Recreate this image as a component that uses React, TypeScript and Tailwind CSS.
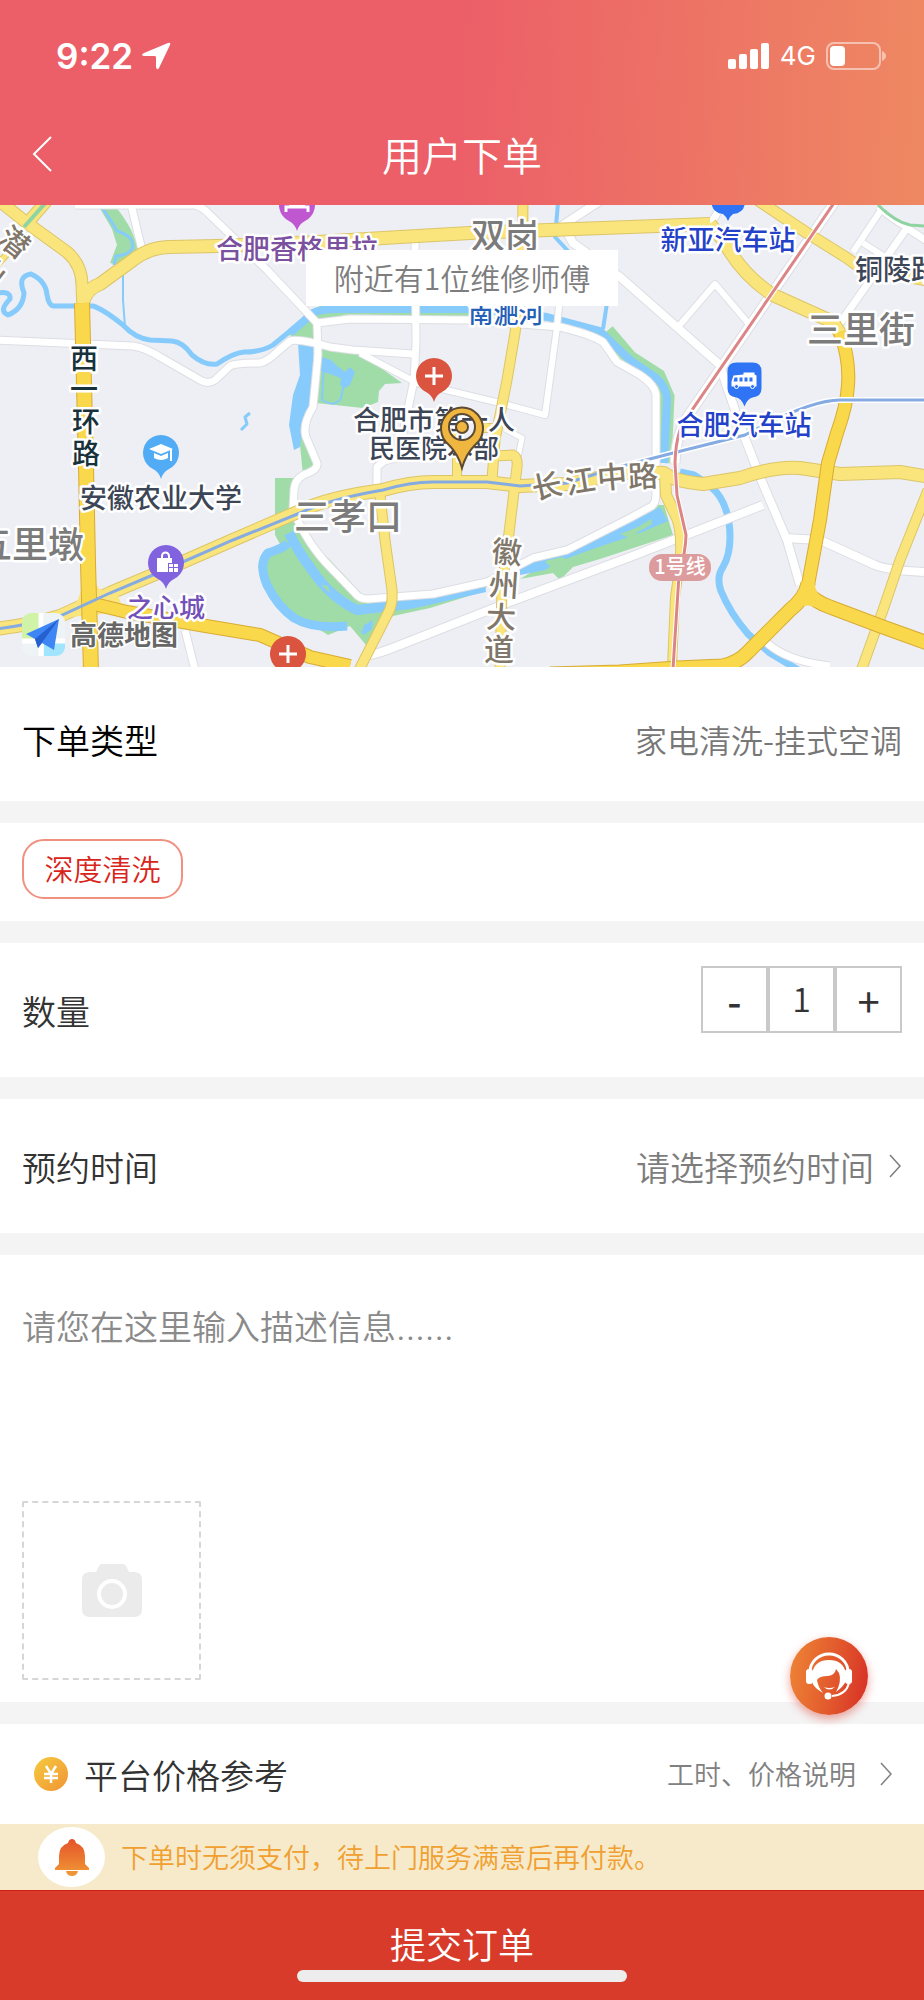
import { useState } from "react";

type Road = { d: string; w: number };

const whiteRoads: Road[] = [
  { d: "M-5 135 L133 141 Q146 143 160 152 L200 175 Q208 180 215 175 L230 161 Q236 158 260 158 Q268 156 277 147 L290 136 Q298 133 330 142 L353 145 L413 149", w: 7 },
  { d: "M75 0 L195 0 Q203 2 210 10 L267 65 L317 118", w: 7 },
  { d: "M317 118 L318 150 L313 202 Q302 220 306 232 L317 258 Q318 264 308 268 Q295 272 294 285 L293 305 Q308 340 330 362 L355 388 Q359 394 368 394 L433 389 L487 377 L533 353 L567 345 L630 313 L652 301 Q656 298 656 288 L656 190 Q655 180 640 170 L617 157 L603 137 Q590 129 560 122 L467 115 L350 114 Z", w: 7 },
  { d: "M130 -5 L142 45", w: 7 },
  { d: "M415 38 L416 138 L414 175 L403 228 L400 252 L384 256 L377 262 L377 284", w: 7 },
  { d: "M360 148 L417 178 L500 198 L545 210 L557 122 L560 90", w: 6 },
  { d: "M600 -4 L563 20 L573 38 L620 72 L720 160 L727 182 L743 228 L760 272 L787 335 L800 380", w: 8 },
  { d: "M678 122 L715 79 L748 118", w: 6 },
  { d: "M836 -5 L692 205 Q676 225 675 258", w: 9 },
  { d: "M370 450 Q380 448 390 444 L507 398 L630 352 L763 300", w: 8 },
  { d: "M784 333 L820 335 L875 360 Q885 365 924 367", w: 8 },
  { d: "M765 436 Q785 456 830 461", w: 7 },
  { d: "M840 118 L907 23 L930 38", w: 7 },
  { d: "M883 2 L853 47 M863 38 L888 54", w: 6 },
  { d: "M907 23 Q890 14 878 2", w: 5 },
  { d: "M185 425 L195 465", w: 7 },
  { d: "M505 224 L522 233 L518 252", w: 5 },
  { d: "M710 20 L722 0", w: 7 },
];

const lightRoads: Road[] = [
  { d: "M-8 -10 L27 18 L67 47 Q82 60 82 80 L83 104", w: 11 },
  { d: "M50 -8 L24 22", w: 11 },
  { d: "M-4 61 L9 47", w: 5 },
  { d: "M83 98 Q86 84 100 79 L133 55 Q150 42 170 42 L217 41 L317 37 L400 32 L470 28 L630 22 L710 19", w: 12 },
  { d: "M710 19 L723 35 Q742 70 773 90 L833 117 L842 132", w: 12 },
  { d: "M523 -5 L522 75 L515 128 L507 175 L495 235 L492 275", w: 9 },
  { d: "M492 251 L513 250 Q518 252 517 262 L509 328 L502 382 L500 465", w: 9 },
  { d: "M457 228 L457 275 M478 223 L500 223", w: 8 },
  { d: "M-5 424 Q30 420 60 411 L110 388 L160 367 L233 335 L300 306 Q330 292 383 285 Q410 277 433 277 L487 277 L520 281 L567 279 L630 267 L664 268 Q673 276 703 279 L740 273 Q775 261 800 263 L840 269 L900 267 L930 272", w: 12 },
  { d: "M380 290 L385 335 L392 385 Q393 400 388 408 L359 465", w: 9 },
  { d: "M665 268 L666 290 L677 313 Q682 325 681 350", w: 10 },
  { d: "M681 350 L675 392 L672 462", w: 8 },
  { d: "M928 285 L900 355 L883 405 L861 466", w: 9 },
  { d: "M753 -8 L807 28 L847 53 L862 64 L930 76", w: 10 },
];

const darkRoads: Road[] = [
  { d: "M82 98 L83 138 L86 262 L88 358 L91 466", w: 14 },
  { d: "M840 127 Q850 155 848 180 Q847 200 837 228 L828 258 L820 315 L808 380", w: 12 },
  { d: "M808 378 Q806 392 790 405 L748 447 Q738 458 722 461 L677 463 L620 467 L550 469", w: 13 },
  { d: "M806 386 Q815 397 830 402 L883 422 L930 439", w: 13 },
  { d: "M90 398 L127 407 L200 420 L260 430 L310 452 L350 461", w: 12 },
];

type Label = { t: string; x: number; y: number; s: number; c: string; anchor?: "start" | "middle" };

const labels: Label[] = [
  { t: "合肥香格里拉", x: 297, y: 54, s: 27, c: "#7a509f" },
  { t: "双岗", x: 505, y: 43, s: 34, c: "#7b7b7b" },
  { t: "南淝河", x: 506, y: 118, s: 25, c: "#2560b8" },
  { t: "新亚汽车站", x: 728, y: 45, s: 27, c: "#2441c9" },
  { t: "铜陵路", x: 855, y: 75, s: 28, c: "#3d4656", anchor: "start" },
  { t: "三里街", x: 861, y: 138, s: 36, c: "#7b7b7b" },
  { t: "安徽农业大学", x: 161, y: 303, s: 27, c: "#3d4656" },
  { t: "五里墩", x: 30, y: 353, s: 36, c: "#7b7b7b" },
  { t: "之心城", x: 166, y: 412, s: 26, c: "#7351b8" },
  { t: "三孝口", x: 348, y: 325, s: 36, c: "#7b7b7b" },
  { t: "合肥市第一人", x: 434, y: 225, s: 27, c: "#3d4656" },
  { t: "民医院本部", x: 434, y: 253, s: 26, c: "#3d4656" },
  { t: "合肥汽车站", x: 744, y: 230, s: 27, c: "#2441c9" },
];

// road names are set one character at a time so they follow the road
const roadNames: { t: string; x: number; y: number; r: number; s: number; c: string }[] = [
  { t: "西", x: 84, y: 153, r: 0, s: 28, c: "#17323a" },
  { t: "一", x: 84, y: 184, r: 0, s: 28, c: "#17323a" },
  { t: "环", x: 86, y: 216, r: 0, s: 28, c: "#17323a" },
  { t: "路", x: 86, y: 248, r: 0, s: 28, c: "#17323a" },
  { t: "长", x: 547, y: 281, r: -12, s: 30, c: "#80776a" },
  { t: "江", x: 580, y: 276, r: -9, s: 30, c: "#80776a" },
  { t: "中", x: 612, y: 272, r: -5, s: 30, c: "#80776a" },
  { t: "路", x: 643, y: 271, r: -3, s: 30, c: "#80776a" },
  { t: "徽", x: 507, y: 347, r: 5, s: 30, c: "#80776a" },
  { t: "州", x: 504, y: 380, r: 4, s: 30, c: "#80776a" },
  { t: "大", x: 501, y: 412, r: 2, s: 30, c: "#80776a" },
  { t: "道", x: 499, y: 444, r: 0, s: 30, c: "#80776a" },
  { t: "潜", x: 14, y: 37, r: 38, s: 30, c: "#80776a" },
  { t: "山", x: -9, y: 66, r: 38, s: 30, c: "#80776a" },
];

function Roads({ roads, fill, edge }: { roads: Road[]; fill: string; edge: string }) {
  return (
    <g fill="none" strokeLinejoin="round">
      {roads.map((r, i) => (
        <path key={i} d={r.d} stroke={edge} strokeWidth={r.w + 2} />
      ))}
      {roads.map((r, i) => (
        <path key={i} d={r.d} stroke={fill} strokeWidth={r.w} />
      ))}
    </g>
  );
}

function Pin({ x, y, color, children }: { x: number; y: number; color: string; children?: React.ReactNode }) {
  return (
    <g transform={`translate(${x} ${y})`}>
      <path d="M0 26 Q-2 19 -8 16 A18 18 0 1 1 8 16 Q2 19 0 26Z" fill={color} />
      {children}
    </g>
  );
}

function CityMap() {
  return (
    <svg
      viewBox="0 0 924 462"
      preserveAspectRatio="xMidYMid slice"
      className="block h-[462px] w-full bg-[#edeff4] font-medium"
      role="img"
      aria-label="高德地图"
    >
      {/* parks */}
      <g fill="#a0dca8">
        <path d="M98 0 L116 2 Q130 20 134 32 L140 46 L118 60 L110 58 L117 40 L112 24 Z" />
        <path d="M287 130 L307 107 L320 101 L355 102 L340 112 L320 122 L314 134 Z" />
        <path d="M320 144 L360 148 L402 178 L385 179 L379 186 L378 197 L363 203 L316 198 Z" />
        <path d="M275 273 L297 273 L295 305 L330 362 L357 388 L366 398 L395 396 L487 379 L485 386 L430 403 L393 411 L366 440 L350 421 L328 430 L320 425 L297 417 L272 392 L258 362 L264 346 L280 339 L275 330 Z" />
        <path d="M308 335 L330 355 L358 385 L366 393 L355 390 L328 366 Z" />
        <path d="M300 205 L310 208 L304 230 L316 262 L303 270 L300 240 Z" />
        <path d="M520 374 L553 368 L560 375 L573 362 L600 354 L673 330 L664 300 L655 300 L620 322 L560 350 Z" />
      </g>
      <g fill="none" stroke="#a0dca8">
        <path d="M607 126 L630 153 L658 171 L667 192 L664 258" strokeWidth="15" />
        <path d="M320 106 L350 105 L480 107" strokeWidth="9" />
      </g>

      {/* rivers and lakes */}
      <g fill="none" stroke="#86cbfb" strokeWidth="5" strokeLinejoin="round">
        <path d="M-2 88 Q11 86 10 94 Q-2 106 8 110 Q23 104 24 88 Q17 71 31 69 Q46 76 47 90 Q49 102 55 101 L93 101 Q103 104 123 120 Q135 133 150 135 L172 136 Q183 137 192 150 Q205 161 217 159 Q233 148 244 147 Q262 147 273 140 L300 118" />
        <path d="M290 128 L313 108 Q320 104 340 104 L480 104 L547 112 L600 126 Q612 138 630 155 L655 172 Q667 182 667 195 L664 258" strokeWidth="8" />
        <path d="M100 0 Q110 14 117 26 Q136 32 132 44 Q128 50 116 51 L114 60" strokeWidth="3" />
        <path d="M123 70 L123 95 L125 122" strokeWidth="2" />
        <path d="M558 -2 L555 32 L568 46 M607 98 L603 124" strokeWidth="4" />
        <path d="M680 267 L694 270 Q714 282 720 292 Q730 308 730 332 Q730 350 723 362 Q716 372 721 386 Q730 408 748 429 L770 448 L800 466" strokeWidth="7" />
        <path d="M288 338 Q284 343 268 348 Q258 358 267 380 Q278 402 294 413 Q312 424 347 421" strokeWidth="9" />
        <path d="M289 328 Q297 345 312 365 Q330 392 357 405 L410 399 L485 382" strokeWidth="10" />
        <path d="M324 155 L322 195 Q335 203 341 193 L344 178" strokeWidth="2" />
        <path d="M250 208 L245 212 L247 219 L241 225" strokeWidth="3" />
      </g>
      <g fill="#86cbfb">
        <path d="M298 138 L314 140 L311 200 L302 224 L300 242 L294 245 L289 220 L293 190 L300 170 Z" />
        <path d="M322 152 L331 155 L337 161 L345 167 L350 162 L355 167 L350 180 L345 183 L340 180 L341 173 L321 166 Z" />
        <path d="M520 358 L533 355 L567 347 L630 317 L660 302 L668 316 L640 328 L590 345 L555 358 L545 365 L520 370 Z" />
        <path d="M356 422 L362 427 L364 420 L373 415 L372 424 L364 430 Z" />
      </g>
      <g fill="#a0dca8">
        <path d="M620 329 L638 322 L651 314 L652 319 L638 327 L632 334 Z" />
        <path d="M545 356 L562 352 L568 355 L560 363 L548 360 Z" />
        <path d="M321 380 L328 381 L330 388 Z" />
      </g>

      <Roads roads={whiteRoads} fill="#ffffff" edge="#dcdee3" />
      <Roads roads={lightRoads} fill="#fae57d" edge="#dcc568" />
      <path d="M49 -6 L24 22" stroke="#8ed4a0" strokeWidth="4" />
      <path d="M60 413 Q80 402 82 378 L96 378 Q98 388 112 385 L118 390 L124 407 Z" fill="#fae57d" />
      <Roads roads={darkRoads} fill="#f9d84b" edge="#d9ab34" />
      <path d="M798 396 Q806 390 807 374 L814 374 Q814 388 826 397 L820 404 Q808 398 800 402 Z" fill="#f9d84b" />

      {/* metro lines */}
      <g fill="none">
        <path d="M615 263 L677 247 L745 230 Q810 195 840 195 L924 195" stroke="#fff" strokeWidth="6" />
        <path d="M-5 424 Q30 420 60 411 L110 388 L160 367 L233 335 L300 308 Q330 294 383 285 Q410 277 433 277 L487 277 L520 281 L567 278 L615 263 L677 247 L745 230 Q810 195 840 195 L924 195" stroke="#85abe2" strokeWidth="3" />
        <path d="M834 -2 L692 205 Q676 220 675 258 L677 290 L686 330 Q686 345 679 370 L673 464" stroke="#fff" strokeWidth="5" />
        <path d="M834 -2 L692 205 Q676 220 675 258 L677 290 L686 330 Q686 345 679 370 L673 464" stroke="#dc8587" strokeWidth="3" />
        <path d="M878 0 Q895 17 910 20 L924 21" stroke="#8ed4a0" strokeWidth="3" />
      </g>

      <rect x="649" y="349" width="62" height="27" rx="13" fill="#dc9b9d" />
      <text x="680" y="369" fontSize="20" fill="#fff" textAnchor="middle">
        1号线
      </text>

      <g stroke="#fff" strokeWidth="5" strokeLinejoin="round" paintOrder="stroke">
        {labels.map((l) => (
          <text key={l.t} x={l.x} y={l.y} fontSize={l.s} fill={l.c} textAnchor={l.anchor ?? "middle"}>
            {l.t}
          </text>
        ))}
        {roadNames.map((n, i) => (
          <text
            key={i}
            transform={`translate(${n.x} ${n.y}) rotate(${n.r})`}
            y={Math.round(n.s * 0.38)}
            fontSize={n.s}
            fill={n.c}
            textAnchor="middle"
          >
            {n.t}
          </text>
        ))}
      </g>

      {/* places */}
      <Pin x={297} y={0} color="#bf58d0">
        <path d="M-11 7 V2 H11 V7 M-8 -1 H8" stroke="#fff" strokeWidth="3" fill="none" />
      </Pin>
      <path d="M711 -4 H745 Q745 8 733 9 Q730 11 728 16 Q726 11 723 9 Q712 8 711 -4Z" fill="#2f74f5" />
      <Pin x={434} y={171} color="#da5440">
        <path d="M-9 0 H9 M0 -9 V9" stroke="#fff" strokeWidth="3" />
      </Pin>
      <Pin x={161} y={248} color="#51acf5">
        <path d="M-12 -4 L0 -9 L12 -4 L0 1Z M-7 0 L0 3 L7 0 V5 Q0 9 -7 5Z" fill="#fff" />
        <path d="M10 -4 V8" stroke="#fff" strokeWidth="2" />
      </Pin>
      <Pin x={166} y={358} color="#8163e0">
        <path d="M-9 -5 H6 V0 H2 V9 H-9Z M3 1 H7 V4 H3Z M8 1 H12 V4 H8Z M3 5 H7 V9 H3Z M8 5 H12 V9 H8Z" fill="#fff" />
        <path d="M-4 -2 V-7 A3 3 0 0 1 3 -7 V-2" stroke="#fff" strokeWidth="2" fill="none" />
      </Pin>
      <Pin x={288} y={449} color="#da5440">
        <path d="M-9 0 H9 M0 -9 V9" stroke="#fff" strokeWidth="3" />
      </Pin>
      <g transform="translate(744.5 175.5)">
        <path d="M-8 -18 H8 Q17 -18 17 -9 V8 Q17 16 8 17 Q3 18 0 26 Q-3 18 -8 17 Q-17 16 -17 8 V-9 Q-17 -18 -8 -18Z" fill="#2f74f5" />
        <path d="M-11 -5 L-1 -6 V-8 H10 V-6 L12 -5 V6 H-13 V1Z" fill="#fff" />
        <path d="M-10 -3 H-7 V1 H-11Z M-5 -3 H-2 V1 H-5Z M0 -3 H3 V1 H0Z M5 -3 H8 V1 H5Z" fill="#2f74f5" />
        <circle cx="-8" cy="6" r="2" fill="#2f74f5" stroke="#fff" />
        <circle cx="8" cy="6" r="2" fill="#2f74f5" stroke="#fff" />
      </g>

      {/* current position */}
      <path
        d="M462 263 Q458 249 449 240 A21 21 0 1 1 475 240 Q466 249 462 263Z M462 209 A13 13 0 1 0 462 235 A13 13 0 1 0 462 209Z"
        fill="#efb640"
        stroke="#5c4a33"
        strokeWidth="2"
        fillRule="evenodd"
      />
      <circle cx="462" cy="222" r="6" fill="#efb640" stroke="#5c4a33" strokeWidth="2" />

      {/* map provider mark */}
      <g transform="translate(22 408)">
        <clipPath id="amap">
          <rect width="43" height="43" rx="9" />
        </clipPath>
        <g clipPath="url(#amap)">
          <rect width="43" height="43" fill="#eef3f5" />
          <path d="M0 0 H17 V26 H0Z" fill="#d0f3a8" />
          <path d="M22 30 H43 V43 H22Z" fill="#a1e4fd" />
          <path d="M19 0 V43 M0 28 H43" stroke="#fff" strokeWidth="5" />
        </g>
        <path d="M37 6 L4 21 L13 26 L16 35 L20 30 L32 37Z" fill="#3f86f5" />
        <path d="M37 6 L13 26 L16 35Z" fill="#2460cf" />
      </g>
      <text x="70" y="440" fontSize="27" fill="#676767" stroke="#fff" strokeWidth="3" paintOrder="stroke" className="font-bold">
        高德地图
      </text>
    </svg>
  );
}

function Chevron({ className }: { className: string }) {
  return (
    <svg viewBox="0 0 12 24" className={className} fill="none" stroke="currentColor" aria-hidden="true">
      <path d="M1 1 L11 12 L1 23" strokeWidth="1.5" />
    </svg>
  );
}

function StatusBar() {
  return (
    <div className="flex h-28 items-center justify-between pr-[38px] pl-14 font-normal text-white">
      <div className="flex items-center gap-2">
        <span className="font-[Inter] text-[35px] leading-10 font-semibold">9:22</span>
        <svg viewBox="0 0 30 28" className="h-7 w-[30px]" fill="currentColor" aria-hidden="true">
          <path d="M27 1 Q30 0 29 3 L18 26 Q16 29 15 25 V15 Q15 14 13 14 H3 Q-1 13 3 11Z" />
        </svg>
      </div>
      <div className="flex items-center gap-2.5">
        <svg viewBox="0 0 42 26" className="h-[26px] w-[42px]" fill="currentColor" aria-hidden="true">
          <rect y="16" width="8" height="10" rx="2" />
          <rect x="11" y="11" width="8" height="15" rx="2" />
          <rect x="22" y="6" width="8" height="20" rx="2" />
          <rect x="33" width="8" height="26" rx="2" />
        </svg>
        <span className="font-[Inter] text-[26px] leading-8">4G</span>
        <svg viewBox="0 0 60 28" className="h-7 w-[60px]" aria-hidden="true">
          <rect x="1" y="1" width="53" height="26" rx="7" fill="none" stroke="#fff" strokeOpacity=".5" strokeWidth="2" />
          <rect x="4" y="4" width="15" height="20" rx="4" fill="#fff" />
          <path d="M56 9 Q60 11 60 14 Q60 17 56 19Z" fill="#fff" fillOpacity=".5" />
        </svg>
      </div>
    </div>
  );
}

export default function App() {
  const [count, setCount] = useState(1);

  return (
    <main className="flex flex-col bg-[#f4f4f4] font-['Noto_Sans_CJK_SC',sans-serif] font-[350] text-[#333]">
      <header className="h-[205px] bg-[linear-gradient(92deg,#ec5f68_50%,#ee8862)]">
        <StatusBar />
        <div className="grid grid-cols-[1fr_auto_1fr] items-center px-8 pt-3.5 text-white">
          <button type="button" aria-label="返回" className="w-6">
            <svg viewBox="0 0 20 36" className="h-9 w-5" fill="none" stroke="currentColor" aria-hidden="true">
              <path d="M19 1 L2 18 L19 35" strokeWidth="2" />
            </svg>
          </button>
          <h1 className="text-[40px] leading-[56px]">用户下单</h1>
        </div>
      </header>

      <section className="relative">
        <CityMap />
        <p className="absolute top-[45px] left-1/2 flex h-14 w-[312px] -translate-x-1/2 items-center justify-center bg-white pb-0.5 text-[30px] text-[#7d7d7d]">
          附近有1位维修师傅
        </p>
      </section>

      <div className="flex flex-col gap-[22px]">
        <section className="flex h-[134px] items-center justify-between bg-white px-[22px] pt-2.5">
          <h2 className="text-[34px] text-black">下单类型</h2>
          <p className="text-[32px] text-[#777]">家电清洗-挂式空调</p>
        </section>

        <section className="h-[98px] bg-white px-[22px] pt-4">
          <button
            type="button"
            className="h-[60px] w-[161px] rounded-[22px] border-2 border-[#f09080] text-[29px] text-[#d8251a]"
          >
            深度清洗
          </button>
        </section>

        <section className="flex h-[134px] justify-between bg-white px-[22px]">
          <label htmlFor="count" className="self-center text-[34px]">
            数量
          </label>
          <div className="mt-[23px] flex h-[67px] text-[34px]">
            <button
              type="button"
              aria-label="减少"
              onClick={() => setCount(Math.max(1, count - 1))}
              className="flex w-[67px] items-center justify-center border-2 border-[#c9c9c9] text-[40px] font-medium"
            >
              -
            </button>
            <input
              id="count"
              value={count}
              onChange={(e) => setCount(Number(e.target.value) || 1)}
              className="w-[67px] border-2 border-[#c9c9c9] pb-1 text-center"
            />
            <button
              type="button"
              aria-label="增加"
              onClick={() => setCount(count + 1)}
              className="flex w-[67px] items-center justify-center border-2 border-[#c9c9c9] text-[40px] font-normal"
            >
              +
            </button>
          </div>
        </section>

        <section className="flex h-[134px] items-center justify-between bg-white px-[22px] text-[34px]">
          <h2 id="time">预约时间</h2>
          <button type="button" aria-describedby="time" className="flex items-center gap-3.5 text-[#7d7d7d]">
            请选择预约时间
            <Chevron className="h-6 w-3.5" />
          </button>
        </section>

        <section className="flex h-[447px] flex-col justify-between bg-white px-[22px] pt-12 pb-[22px]">
          <textarea
            aria-label="描述信息"
            placeholder="请您在这里输入描述信息……"
            className="h-40 w-full resize-none font-[Inter,'Noto_Sans_CJK_SC',sans-serif] text-[34px] leading-[50px] outline-none placeholder:text-[#8a8a8a]"
          />
          <button
            type="button"
            aria-label="上传照片"
            className="flex size-[179px] items-center justify-center rounded-xs border-2 border-dashed border-[#d6d6d6]"
          >
            <svg viewBox="0 0 60 53" className="h-[53px] w-[60px]" aria-hidden="true">
              <path
                d="M8 8 H14 L17 2 Q18 0 20 0 H41 Q43 0 44 2 L47 8 H52 Q60 8 60 16 V45 Q60 53 52 53 H8 Q0 53 0 45 V16 Q0 8 8 8Z"
                fill="#ebebeb"
              />
              <circle cx="30" cy="30" r="13" fill="none" stroke="#fff" strokeWidth="4" />
            </svg>
          </button>
        </section>

        <section className="relative flex h-[100px] items-center justify-between bg-white pr-8 pl-[34px]">
          <h2 className="flex items-center gap-4 text-[34px]">
            <svg viewBox="0 0 34 34" className="size-[34px]" aria-hidden="true">
              <linearGradient id="coin" x2="1" y2="1">
                <stop stopColor="#f5cb3e" />
                <stop offset="1" stopColor="#f19435" />
              </linearGradient>
              <circle cx="17" cy="17" r="17" fill="url(#coin)" />
              <path d="M12 9 L17 17 L22 9 M17 16 V26 M10 17 H24 M10 21 H24" fill="none" stroke="#fff" strokeWidth="2.5" />
            </svg>
            平台价格参考
          </h2>
          <a href="#price" className="flex items-center gap-6 text-[27px] text-[#808080]">
            工时、价格说明
            <Chevron className="h-6 w-3" />
          </a>

          <button
            type="button"
            aria-label="联系客服"
            className="absolute -top-[87px] right-14 size-[78px] rounded-full bg-linear-100 from-[#ee8536] to-[#d93627] to-90% shadow-[0_4px_10px_rgba(217,54,39,0.45)]"
          >
            <svg viewBox="0 0 78 78" className="size-[78px]" fill="#fff" aria-hidden="true">
              <path d="M20 35 A19 18 0 0 1 58 35" fill="none" stroke="#fff" strokeWidth="3" />
              <rect x="16" y="32" width="7" height="15" rx="3" />
              <rect x="55" y="32" width="7" height="15" rx="3" />
              <path d="M22 36 Q25 23 39 23 Q53 23 56 36 V44 Q53 50 46 55 Q52 44 49 36 L46 32 Q45 38 38 39 Q29 39 27 43 Q28 50 33 56 Q24 51 22 45Z" />
              <path d="M34 50 Q39 55 45 50 Q39 52 34 50Z" />
              <path d="M59 46 Q56 58 42 59" fill="none" stroke="#fff" strokeWidth="2" />
              <circle cx="38" cy="59" r="3.5" />
            </svg>
          </button>
        </section>
      </div>

      <p className="flex h-[66px] items-center gap-4 bg-[#f7eaca] pl-[38px] text-[27px] text-[#f0a030]">
        <span className="flex h-[60px] w-[67px] items-center justify-center rounded-[50%] bg-white">
          <svg viewBox="0 0 34 37" className="h-[37px] w-[34px]" aria-hidden="true">
            <linearGradient id="bell" x2="0" y2="1">
              <stop stopColor="#e4522a" />
              <stop offset="1" stopColor="#f19a36" />
            </linearGradient>
            <path
              d="M17 0 Q20 0 21 4 Q30 7 30 17 V25 L34 29 V31 H0 V29 L4 25 V17 Q4 7 13 4 Q14 0 17 0Z M11 32 H23 Q22 37 17 37 Q12 37 11 32Z"
              fill="url(#bell)"
            />
          </svg>
        </span>
        下单时无须支付，待上门服务满意后再付款。
      </p>

      <footer className="relative">
        <button
          type="submit"
          className="block h-[110px] w-full border-t border-[#cf1f12] bg-[#d83b2a] pb-1.5 text-[36px] text-white"
        >
          提交订单
        </button>
        <span className="absolute bottom-[18px] left-1/2 h-3 w-[330px] -translate-x-1/2 rounded-full bg-[#ededed]" />
      </footer>
    </main>
  );
}
